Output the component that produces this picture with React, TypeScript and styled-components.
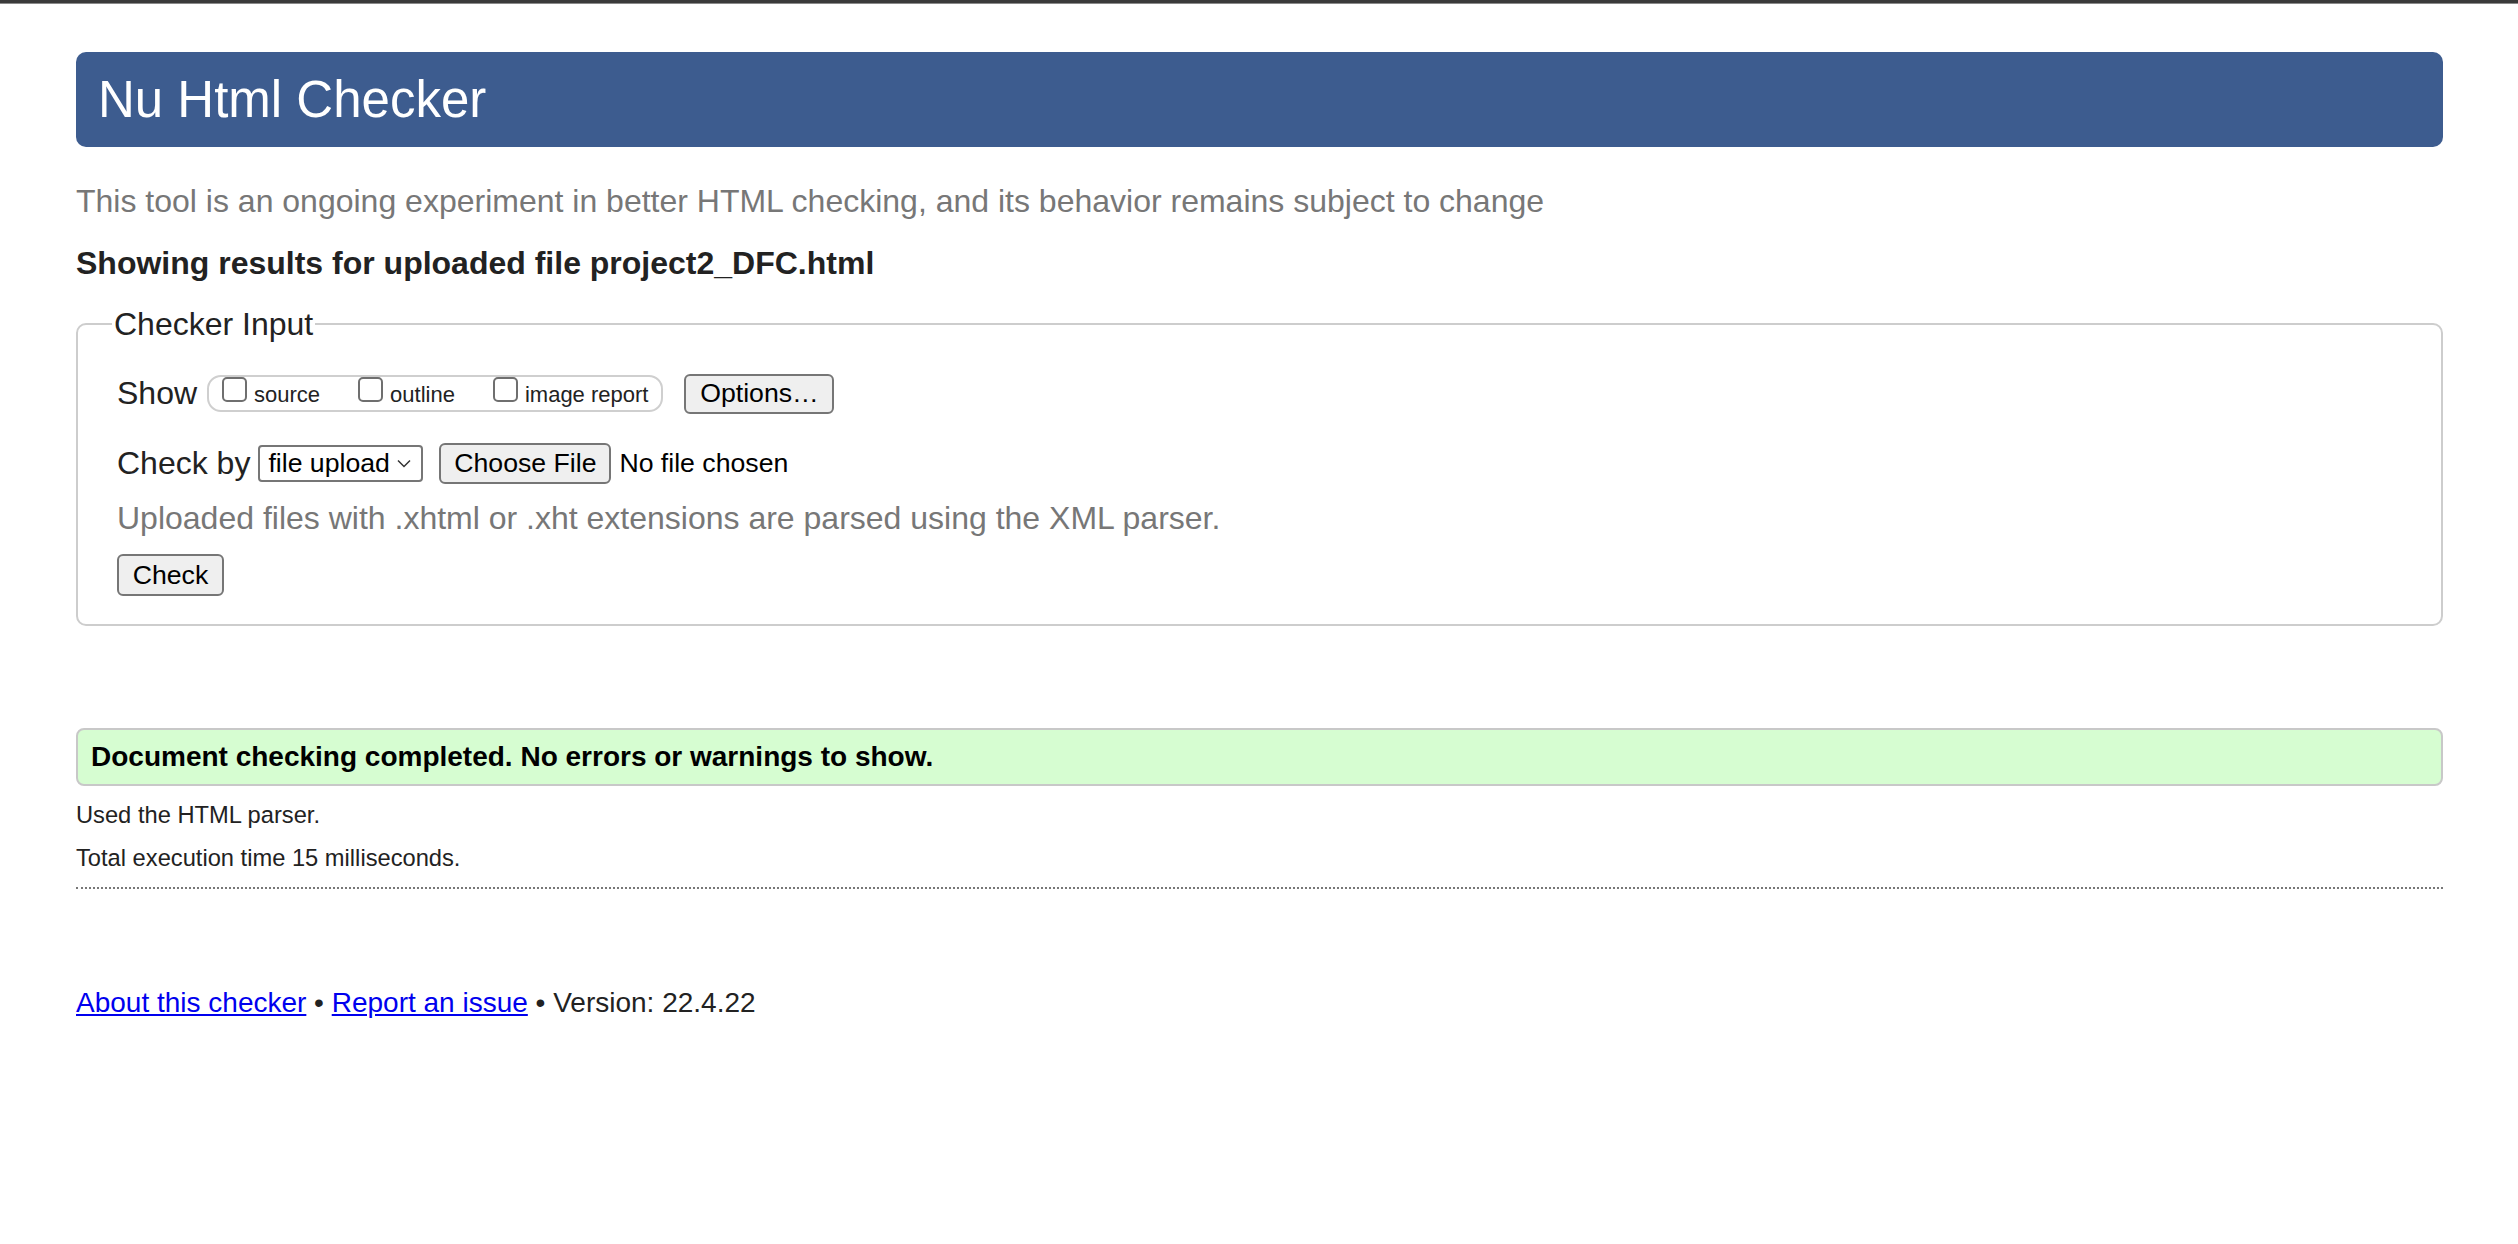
import React from "react";
import styled, { createGlobalStyle } from "styled-components";

const GlobalStyle = createGlobalStyle`
  html, body {
    margin: 0;
    padding: 0;
    background: #fff;
  }
  body {
    font-family: "Liberation Sans", Arial, Helvetica, sans-serif;
    color: #222;
  }
`;

const TopBar = styled.div`
  height: 3px;
  background: #3a3a3a;
  border-bottom: 1px solid #8a8a8a;
`;

const Page = styled.main`
  padding: 0 75px 0 76px;
`;

const Banner = styled.h1`
  margin: 48px 0 0 0;
  height: 95px;
  line-height: 95px;
  padding: 0 22px;
  background: #3d5c8f;
  border-radius: 10px;
  color: #fff;
  font-size: 51px;
  font-weight: normal;
`;

const Intro = styled.p`
  margin: 35px 0 0 0;
  font-size: 32px;
  line-height: 38px;
  color: #777;
`;

const ResultsFor = styled.p`
  margin: 24px 0 0 0;
  font-size: 32px;
  line-height: 38px;
  font-weight: bold;
  color: #222;
`;

const InputSet = styled.fieldset`
  margin: 23px 0 0 0;
  padding: 30px 37px 28px 39px;
  border: 2px solid #cdcdcd;
  border-radius: 10px;
  min-width: 0;
`;

const Legend = styled.legend`
  margin-left: -5px;
  padding: 0 2px;
  font-size: 32px;
  line-height: 38px;
  color: #222;
`;

const Row = styled.div<{ $gap?: number }>`
  display: flex;
  align-items: center;
  height: 41px;
  margin-top: ${p => p.$gap ?? 0}px;
`;

const Label = styled.span`
  font-size: 32px;
  color: #222;
  margin-right: 8px;
`;

const ToggleGroup = styled.div`
  display: flex;
  align-items: flex-start;
  box-sizing: border-box;
  height: 37px;
  padding: 0 13px 0 13px;
  margin-left: 2px;
  margin-right: 21px;
  border: 2px solid #cfcfcf;
  border-radius: 14px;
`;

const Toggle = styled.label`
  display: flex;
  align-items: baseline;
  font-size: 22px;
  color: #222;
  margin-right: 38px;

  &:last-child {
    margin-right: 0;
  }
`;

const Box = styled.span`
  display: inline-block;
  box-sizing: border-box;
  width: 25px;
  height: 25px;
  margin-right: 7px;
  border: 2px solid #6f6f6f;
  border-radius: 5px;
  background: #fff;
`;

const Button = styled.button<{ $w: number; $h: number }>`
  box-sizing: border-box;
  width: ${p => p.$w}px;
  height: ${p => p.$h}px;
  padding: 0;
  font-family: "Liberation Sans", Arial, sans-serif;
  font-size: 26.67px;
  color: #000;
  background: #efefef;
  border: 2px solid #767676;
  border-radius: 6px;
`;

const Select = styled.div`
  display: flex;
  align-items: center;
  justify-content: space-between;
  box-sizing: border-box;
  width: 165px;
  height: 37px;
  padding: 0 10px 0 8px;
  margin-right: 16px;
  font-size: 26.67px;
  color: #000;
  border: 2px solid #767676;
  border-radius: 4px;
  background: #fff;
`;

const FileName = styled.span`
  margin-left: 8px;
  font-size: 26.67px;
  color: #000;
`;

const Hint = styled.p`
  margin: 15px 0 0 0;
  font-size: 32px;
  line-height: 38px;
  color: #777;
`;

const CheckRow = styled.div`
  margin-top: 17px;
`;

const Success = styled.div`
  box-sizing: border-box;
  margin-top: 102px;
  height: 58px;
  display: flex;
  align-items: center;
  padding: 0 13px;
  background: #d6fdd1;
  border: 2px solid #c8c8c8;
  border-radius: 8px;
  font-size: 28px;
  font-weight: bold;
  color: #000;
`;

const Note = styled.p<{ $top: number }>`
  margin: ${p => p.$top}px 0 0 0;
  font-size: 23.7px;
  line-height: 29px;
  color: #222;
`;

const Divider = styled.hr`
  margin: 14px 0 0 0;
  border: 0;
  border-top: 2px dotted #777;
`;

const Footer = styled.p`
  margin: 97px 0 0 0;
  font-size: 28px;
  line-height: 34px;
  color: #222;

  a {
    color: #0000ee;
    text-decoration: underline;
  }
`;

const Chevron = () => (
  <svg width="14" height="9" viewBox="0 0 14 9" fill="none">
    <path d="M1 1.5l6 6 6-6" stroke="#333" strokeWidth="1.5" />
  </svg>
);

const toggles = ["source", "outline", "image report"];

export default function App() {
  return (
    <>
      <GlobalStyle />
      <TopBar />
      <Page>
        <Banner>Nu Html Checker</Banner>
        <Intro>
          This tool is an ongoing experiment in better HTML checking, and its
          behavior remains subject to change
        </Intro>
        <ResultsFor>Showing results for uploaded file project2_DFC.html</ResultsFor>

        <InputSet>
          <Legend>Checker Input</Legend>
          <Row>
            <Label>Show</Label>
            <ToggleGroup>
              {toggles.map(t => (
                <Toggle key={t}>
                  <Box />
                  {t}
                </Toggle>
              ))}
            </ToggleGroup>
            <Button $w={150} $h={40}>Options…</Button>
          </Row>
          <Row $gap={29}>
            <Label>Check by</Label>
            <Select>
              <span>file upload</span>
              <Chevron />
            </Select>
            <Button $w={172} $h={41}>Choose File</Button>
            <FileName>No file chosen</FileName>
          </Row>
          <Hint>Uploaded files with .xhtml or .xht extensions are parsed using the XML parser.</Hint>
          <CheckRow>
            <Button $w={107} $h={42}>Check</Button>
          </CheckRow>
        </InputSet>

        <Success>Document checking completed. No errors or warnings to show.</Success>
        <Note $top={15}>Used the HTML parser.</Note>
        <Note $top={14}>Total execution time 15 milliseconds.</Note>
        <Divider />

        <Footer>
          <a href="#about">About this checker</a> • <a href="#issue">Report an issue</a> • Version: 22.4.22
        </Footer>
      </Page>
    </>
  );
}
